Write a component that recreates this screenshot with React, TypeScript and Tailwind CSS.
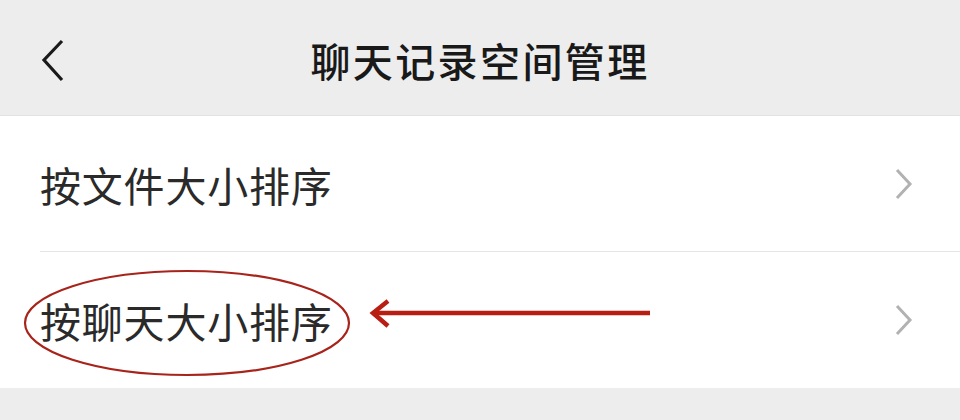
export default function App() {
  const font = { fontFamily: '"Noto Sans CJK SC", "Noto Sans", sans-serif' };

  return (
    <div className="w-[960px] h-[420px] bg-[#ededed] overflow-hidden" style={font}>
      {/* Header */}
      <div className="relative h-[116px] flex items-center justify-center border-b border-[#e2e2e2]">
        <svg className="absolute left-[36px] top-[36px]" width="34" height="50" viewBox="0 0 34 50">
          <polyline points="26,5 8,24 26,44" fill="none" stroke="#1a1a1a" strokeWidth="3.2" strokeLinejoin="miter" />
        </svg>
        <h1 className="text-[40px] leading-none font-medium text-[#191919] tracking-[2.4px] mt-[4px]">聊天记录空间管理</h1>
      </div>

      {/* List */}
      <div className="bg-white">
        <Row label="按文件大小排序" divider />
        <div className="relative">
          <Row label="按聊天大小排序" />
          {/* annotation: circle + arrow */}
          <svg className="absolute left-0 top-0 pointer-events-none" width="960" height="136" viewBox="0 0 960 136">
            <ellipse cx="187" cy="71" rx="162" ry="52" fill="none" stroke="#a8231a" strokeWidth="2.2" />
            <line x1="374" y1="61" x2="650" y2="61" stroke="#b81e12" strokeWidth="4.5" />
            <polyline points="388,49 373,61 388,74" fill="none" stroke="#b81e12" strokeWidth="4.5" />
          </svg>
        </div>
      </div>
    </div>
  );
}

function Row({ label, divider }: { label: string; divider?: boolean }) {
  return (
    <div className="relative h-[136px] flex items-center pl-[40px] pr-[44px]">
      <span className="flex-1 text-[41px] leading-none tracking-[0.8px] text-[#2a2a2a]">{label}</span>
      <svg width="24" height="36" viewBox="0 0 24 36">
        <polyline points="5,4 18,18 5,32" fill="none" stroke="#b2b2b2" strokeWidth="3" />
      </svg>
      {divider && <div className="absolute bottom-0 left-[40px] right-0 h-px bg-[#e5e5e5]" />}
    </div>
  );
}
